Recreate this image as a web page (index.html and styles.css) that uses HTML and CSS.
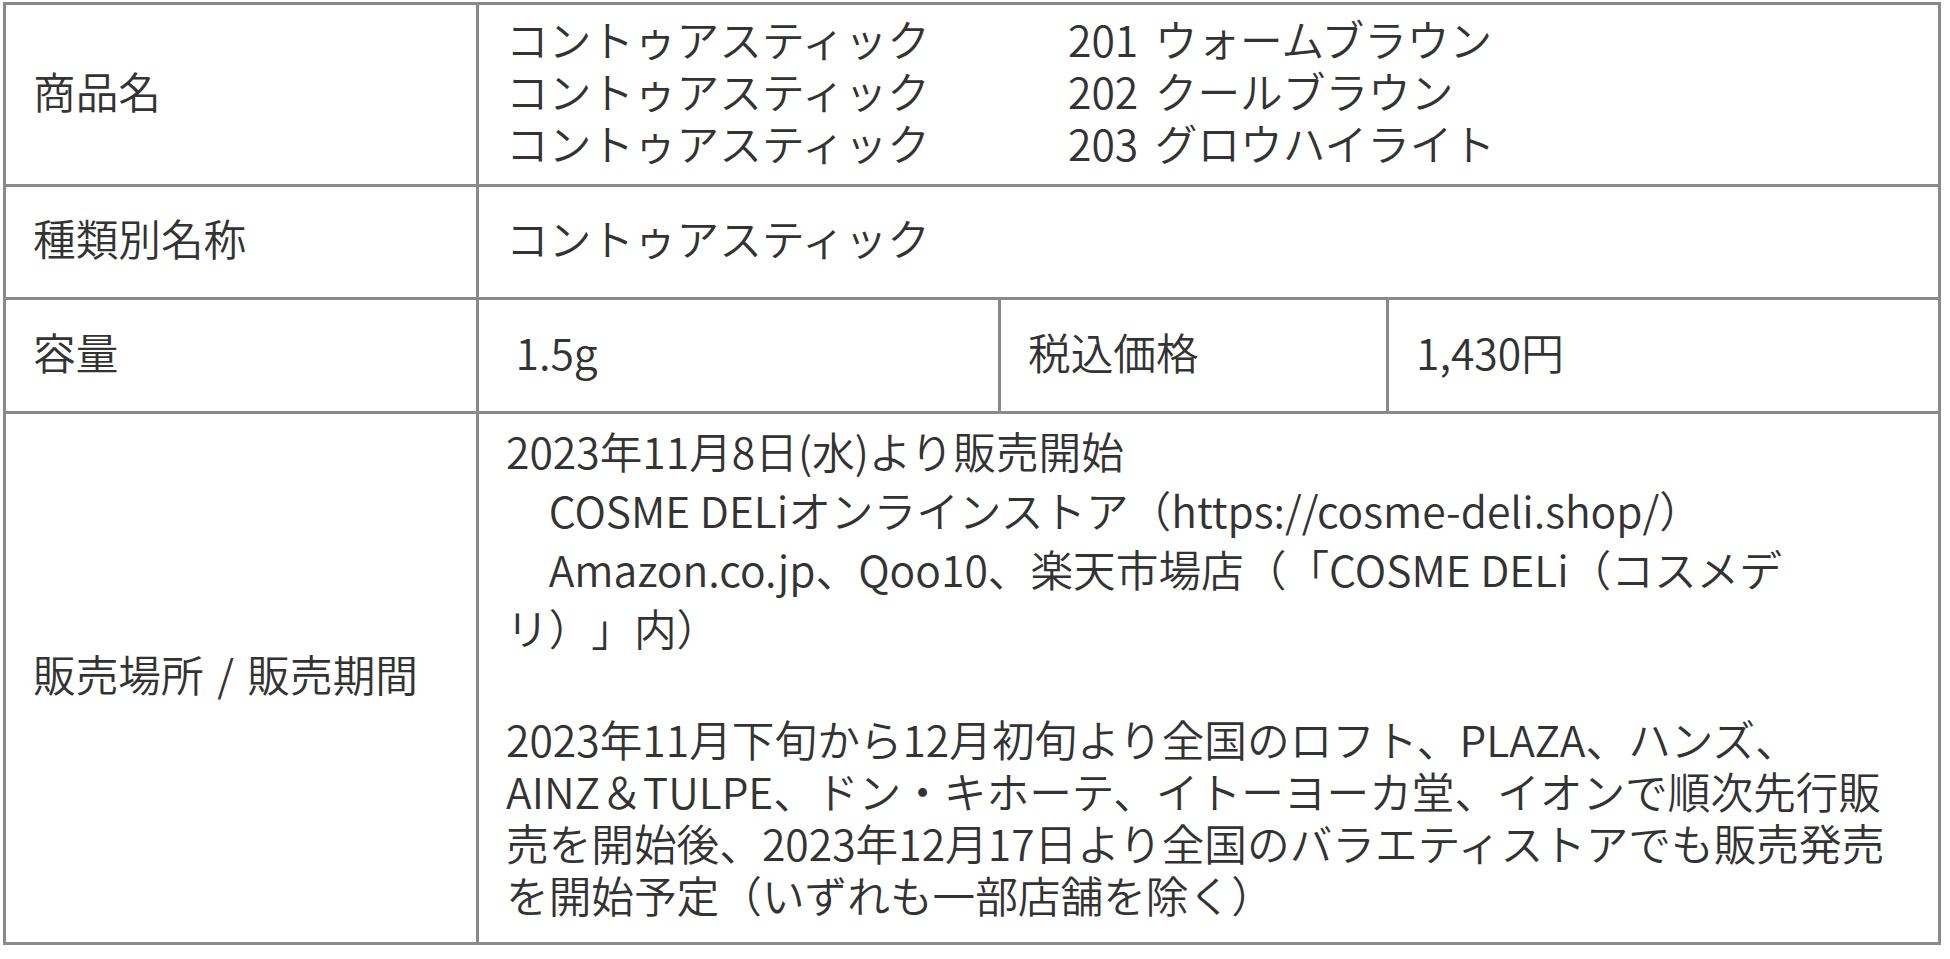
FILE: index.html
```html
<!DOCTYPE html>
<html lang="ja">
<head>
<meta charset="utf-8">
<title>商品情報</title>
<link rel="stylesheet" href="styles.css">
</head>
<body>
<table class="spec">
  <colgroup>
    <col class="c1"><col class="c2"><col class="c3"><col class="c4">
  </colgroup>
  <tr class="r1">
    <th>商品名</th>
    <td colspan="3">
      <div class="names">
        <span>コントゥアスティック</span><span class="shade">201 ウォームブラウン</span>
        <span>コントゥアスティック</span><span class="shade">202 クールブラウン</span>
        <span>コントゥアスティック</span><span class="shade">203 グロウハイライト</span>
      </div>
    </td>
  </tr>
  <tr class="r2">
    <th>種類別名称</th>
    <td colspan="3">コントゥアスティック</td>
  </tr>
  <tr class="r3">
    <th>容量</th>
    <td>&nbsp;1.5g</td>
    <td>税込価格</td>
    <td>1,430円</td>
  </tr>
  <tr class="r4">
    <th class="wide">販売場所 / 販売期間</th>
    <td colspan="3" class="sales">
      <p class="p1">2023年11月8日(水)より販売開始<br>　COSME DELiオンラインストア（https://cosme-deli.shop/）<br>　Amazon.co.jp、Qoo10、楽天市場店（「COSME DELi（コスメデ<br>リ）」内）</p>
      <p class="p2">2023年11月下旬から12月初旬より全国のロフト、PLAZA、ハンズ、<br>AINZ＆TULPE、ドン・キホーテ、イトーヨーカ堂、イオンで順次先行販<br>売を開始後、2023年12月17日より全国のバラエティストアでも販売発売<br>を開始予定（いずれも一部店舗を除く）</p>
    </td>
  </tr>
</table>
</body>
</html>
```

FILE: styles.css
```css
html, body {
  margin: 0;
  padding: 0;
  background: #ffffff;
}

body {
  font-family: "Noto Sans CJK JP", "Noto Sans", sans-serif;
  color: #333333;
  text-spacing-trim: space-all;
}

.spec {
  margin: 2px 0 0 3px;
  width: 1938px;
  table-layout: fixed;
  border-collapse: separate;
  border-spacing: 0;
  border-top: 3px solid #8a8a8a;
  border-left: 3px solid #8a8a8a;
  font-size: 42.67px;
  line-height: 52px;
}

.c1 { width: 473px; }
.c2 { width: 522px; }
.c3 { width: 388px; }
.c4 { width: 552px; }

.spec th,
.spec td {
  border-right: 3px solid #8a8a8a;
  border-bottom: 3px solid #8a8a8a;
  padding: 0 0 8px 27px;
  text-align: left;
  font-weight: 350;
  vertical-align: middle;
  white-space: nowrap;
}

.spec th.wide {
  word-spacing: 4px;
}

.shade {
  word-spacing: 7px;
}

.r1 { height: 182px; }
.r2 { height: 113px; }
.r3 { height: 114px; }
.r4 { height: 531px; }

.names {
  display: grid;
  grid-template-columns: 562px auto;
}

.spec td.sales {
  vertical-align: top;
  padding-top: 7px;
  padding-bottom: 0;
}

.p1 {
  margin: 0;
  line-height: 59px;
}

.p2 {
  margin: 56px 0 0;
  line-height: 52px;
}
```
